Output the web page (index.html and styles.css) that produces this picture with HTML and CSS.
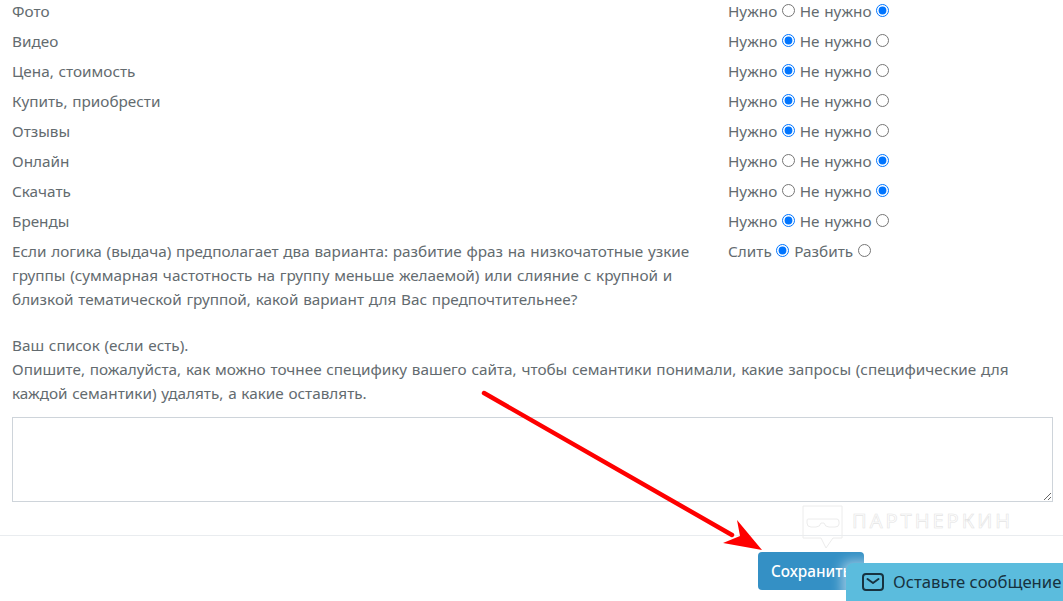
FILE: index.html
```html
<!DOCTYPE html>
<html lang="ru">
<head>
  <meta charset="UTF-8">
  <title>Настройки семантики</title>
  <link rel="stylesheet" href="styles.css">
</head>
<body>
  <form class="anketa">
    <div class="telo">
      <div class="ryad">
        <div class="vopros">Фото</div>
        <div class="otvet">
          <label>Нужно <input type="radio" name="r1"></label>
          <label>Не нужно <input type="radio" name="r1" checked></label>
        </div>
      </div>
      <div class="ryad">
        <div class="vopros">Видео</div>
        <div class="otvet">
          <label>Нужно <input type="radio" name="r2" checked></label>
          <label>Не нужно <input type="radio" name="r2"></label>
        </div>
      </div>
      <div class="ryad">
        <div class="vopros">Цена, стоимость</div>
        <div class="otvet">
          <label>Нужно <input type="radio" name="r3" checked></label>
          <label>Не нужно <input type="radio" name="r3"></label>
        </div>
      </div>
      <div class="ryad">
        <div class="vopros">Купить, приобрести</div>
        <div class="otvet">
          <label>Нужно <input type="radio" name="r4" checked></label>
          <label>Не нужно <input type="radio" name="r4"></label>
        </div>
      </div>
      <div class="ryad">
        <div class="vopros">Отзывы</div>
        <div class="otvet">
          <label>Нужно <input type="radio" name="r5" checked></label>
          <label>Не нужно <input type="radio" name="r5"></label>
        </div>
      </div>
      <div class="ryad">
        <div class="vopros">Онлайн</div>
        <div class="otvet">
          <label>Нужно <input type="radio" name="r6"></label>
          <label>Не нужно <input type="radio" name="r6" checked></label>
        </div>
      </div>
      <div class="ryad">
        <div class="vopros">Скачать</div>
        <div class="otvet">
          <label>Нужно <input type="radio" name="r7"></label>
          <label>Не нужно <input type="radio" name="r7" checked></label>
        </div>
      </div>
      <div class="ryad">
        <div class="vopros">Бренды</div>
        <div class="otvet">
          <label>Нужно <input type="radio" name="r8" checked></label>
          <label>Не нужно <input type="radio" name="r8"></label>
        </div>
      </div>
      <div class="ryad">
        <div class="vopros">Если логика (выдача) предполагает два варианта: разбитие фраз на низкочатотные узкие группы (суммарная частотность на группу меньше желаемой) или слияние с крупной и близкой тематической группой, какой вариант для Вас предпочтительнее?</div>
        <div class="otvet">
          <label>Слить <input type="radio" name="r9" checked></label>
          <label>Разбить <input type="radio" name="r9"></label>
        </div>
      </div>
      <p class="spisok">Ваш список (если есть).<br>Опишите, пожалуйста, как можно точнее специфику вашего сайта, чтобы семантики понимали, какие запросы (специфические для каждой семантики) удалять, а какие оставлять.</p>
      <textarea class="pole"></textarea>
    </div>
    <div class="niz">
      <button type="button" class="sohranit">Сохранить</button>
    </div>
  </form>

  <!-- водяной знак -->
  <div class="znak">
    <svg width="42" height="45" viewBox="0 0 42 45" fill="none" stroke="#ececec" stroke-width="1">
      <path d="M1 1H40V33H31L24 43L19 33H1Z"/>
      <path d="M6 14H35Q37 14 37 17V19Q37 22 33 22H27Q23 22 22 18H19Q18 22 14 22H9Q5 22 5 18V16Q5 14 6 14Z"/>
    </svg>
    <span>ПАРТНЕРКИН</span>
  </div>

  <!-- стрелка -->
  <svg class="strelka" width="300" height="180" viewBox="0 0 300 180">
    <path d="M14 13L262 155" stroke="#fe0000" stroke-width="4.5" stroke-linecap="round" fill="none"/>
    <path d="M292 170L253 163L270 156L267 140Z" fill="#fe0000"/>
  </svg>

  <div class="chat">
    <svg width="22" height="18" viewBox="0 0 22 18" fill="none" stroke="#17323f" stroke-width="2" stroke-linecap="round" stroke-linejoin="round">
      <rect x="1" y="1" width="20" height="16" rx="3"/>
      <path d="M5.5 6L11 10L16.5 6"/>
    </svg>
    <span>Оставьте сообщение</span>
  </div>
</body>
</html>
```

FILE: styles.css
```css
* {
  box-sizing: border-box;
}

html, body {
  height: 601px;
  overflow: hidden;
}

body {
  margin: 0;
  background: #fff;
  color: #636b6f;
  font-family: "Noto Sans", Arial, sans-serif;
  font-size: 15.3px;
  line-height: 24px;
  word-spacing: 0.75px;
}

.anketa {
  margin-top: -1px;
}

.telo {
  padding: 0 10px 33px 12px;
  border-bottom: 1px solid #e9ecef;
}

.ryad {
  display: flex;
  padding-bottom: 6px;
}

.vopros {
  width: 716px;
  padding-right: 20px;
}

.otvet input {
  margin: 0;
  width: 13px;
  height: 13px;
}

.spisok {
  margin: 16px 0 12px;
}

.pole {
  display: block;
  width: 100%;
  height: 85px;
  border: 1px solid #ced4da;
  background: #fff;
}

.niz {
  padding: 16px 0 0 758px;
}

.sohranit {
  width: 106px;
  height: 38px;
  padding: 0 0 0 13px;
  border: none;
  border-radius: 4px;
  background: #3490c5;
  color: #fff;
  font-family: inherit;
  font-size: 15.3px;
  font-weight: 500;
  text-align: left;
  white-space: nowrap;
}

.znak {
  position: absolute;
  left: 802px;
  top: 505px;
  display: flex;
  gap: 8px;
  color: #fff;
  font-size: 20px;
  line-height: 32px;
}

.znak span {
  -webkit-text-stroke: 0.6px #e4e4e4;
  letter-spacing: 3px;
}

.strelka {
  position: absolute;
  left: 470px;
  top: 380px;
}

.chat {
  position: absolute;
  left: 846px;
  top: 563px;
  width: 217px;
  height: 38px;
  padding-left: 16px;
  display: flex;
  align-items: center;
  gap: 9px;
  overflow: hidden;
  border-radius: 8px 0 0 0;
  background: #5bbcdd;
  color: #17323f;
  font-size: 16.7px;
  word-spacing: 0;
  white-space: nowrap;
  box-shadow: -4px -2px 12px rgba(255, 255, 255, 0.5);
}

.chat svg {
  flex-shrink: 0;
}
```
